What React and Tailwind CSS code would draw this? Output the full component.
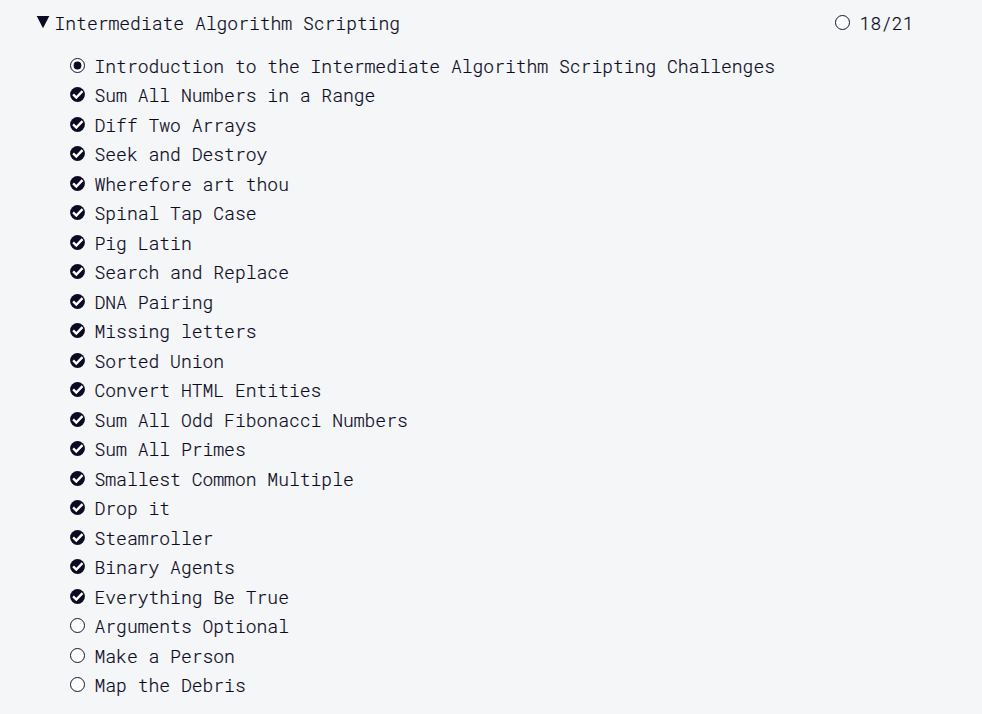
const challenges = [
  ['Introduction to the Intermediate Algorithm Scripting Challenges', 'intro'],
  ['Sum All Numbers in a Range', 'passed'],
  ['Diff Two Arrays', 'passed'],
  ['Seek and Destroy', 'passed'],
  ['Wherefore art thou', 'passed'],
  ['Spinal Tap Case', 'passed'],
  ['Pig Latin', 'passed'],
  ['Search and Replace', 'passed'],
  ['DNA Pairing', 'passed'],
  ['Missing letters', 'passed'],
  ['Sorted Union', 'passed'],
  ['Convert HTML Entities', 'passed'],
  ['Sum All Odd Fibonacci Numbers', 'passed'],
  ['Sum All Primes', 'passed'],
  ['Smallest Common Multiple', 'passed'],
  ['Drop it', 'passed'],
  ['Steamroller', 'passed'],
  ['Binary Agents', 'passed'],
  ['Everything Be True', 'passed'],
  ['Arguments Optional', 'open'],
  ['Make a Person', 'open'],
  ['Map the Debris', 'open'],
];

function StatusIcon({ status }) {
  if (status === 'passed') {
    return (
      <svg viewBox="0 0 15 15" className="size-[15px] shrink-0" aria-hidden="true">
        <circle cx="7.5" cy="7.5" r="7.4" fill="#0a0a23" />
        <path d="M3.1 7.3l3.2 3.2 6.2-6.4" fill="none" stroke="#fff" strokeWidth="2.4" />
      </svg>
    );
  }
  return (
    <svg viewBox="0 0 15 15" className="size-[15px] shrink-0" aria-hidden="true">
      <circle cx="7.5" cy="7.5" r="7" fill="#fff" stroke="#0a0a23" strokeWidth="0.95" />
      {status === 'intro' && <circle cx="7.5" cy="7.5" r="3.9" fill="#0a0a23" />}
    </svg>
  );
}

export default function App() {
  return (
    <main className="h-[714px] overflow-hidden bg-[#f5f6f7] pt-[9px] font-['Roboto_Mono','Liberation_Mono',monospace] text-[18px] font-light text-[#0a0a23] [-webkit-text-stroke:0.2px_#0a0a23]">
      <header className="flex h-[29px] items-center pr-[68.5px] pl-[37px]">
        <svg viewBox="0 0 12 12" className="mb-[3px] size-3 shrink-0 overflow-visible" aria-hidden="true">
          <path d="M-.3 0h12.6L6 12.3z" fill="#0a0a23" />
        </svg>
        <h1 className="ml-[5.5px] flex-1 font-light whitespace-nowrap">Intermediate Algorithm Scripting</h1>
        <div className="flex items-center">
          <span className="mb-[2px]"><StatusIcon status="open" /></span>
          <span className="ml-[9.5px]">18/21</span>
        </div>
      </header>
      <ul className="mt-[13.6px] pl-[70px]">
        {challenges.map(([title, status]) => (
          <li key={title} className="flex h-[29.5px] items-center gap-[9.5px]">
            <span className="mb-[2px]"><StatusIcon status={status} /></span>
            <span className="whitespace-nowrap">{title}</span>
          </li>
        ))}
      </ul>
    </main>
  );
}
